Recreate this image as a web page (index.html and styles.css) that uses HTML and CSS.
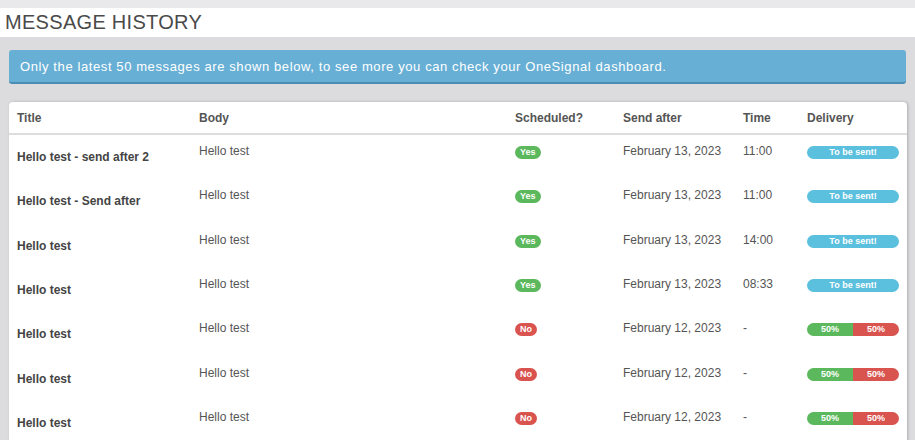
FILE: index.html
```html
<!DOCTYPE html>
<html lang="en">
<head>
<meta charset="utf-8">
<title>Message History</title>
<link rel="stylesheet" href="styles.css">
</head>
<body>
<div class="topbar"></div>
<header class="page-header">MESSAGE HISTORY</header>
<main class="content">
  <div class="alert">Only the latest 50 messages are shown below, to see more you can check your OneSignal dashboard.</div>
  <div class="card">
    <table class="history">
      <colgroup>
        <col class="c-title"><col class="c-body"><col class="c-sched"><col class="c-date"><col class="c-time"><col class="c-del">
      </colgroup>
      <thead>
        <tr><th>Title</th><th>Body</th><th>Scheduled?</th><th>Send after</th><th>Time</th><th>Delivery</th></tr>
      </thead>
      <tbody>
        <tr><td class="title">Hello test - send after 2</td><td>Hello test</td><td><span class="label yes">Yes</span></td><td>February 13, 2023</td><td>11:00</td><td><div class="pill">To be sent!</div></td></tr>
        <tr><td class="title">Hello test - Send after</td><td>Hello test</td><td><span class="label yes">Yes</span></td><td>February 13, 2023</td><td>11:00</td><td><div class="pill">To be sent!</div></td></tr>
        <tr><td class="title">Hello test</td><td>Hello test</td><td><span class="label yes">Yes</span></td><td>February 13, 2023</td><td>14:00</td><td><div class="pill">To be sent!</div></td></tr>
        <tr><td class="title">Hello test</td><td>Hello test</td><td><span class="label yes">Yes</span></td><td>February 13, 2023</td><td>08:33</td><td><div class="pill">To be sent!</div></td></tr>
        <tr><td class="title">Hello test</td><td>Hello test</td><td><span class="label no">No</span></td><td>February 12, 2023</td><td>-</td><td><div class="progress"><span class="seg ok" style="width:50%">50%</span><span class="seg fail" style="width:50%">50%</span></div></td></tr>
        <tr><td class="title">Hello test</td><td>Hello test</td><td><span class="label no">No</span></td><td>February 12, 2023</td><td>-</td><td><div class="progress"><span class="seg ok" style="width:50%">50%</span><span class="seg fail" style="width:50%">50%</span></div></td></tr>
        <tr><td class="title">Hello test</td><td>Hello test</td><td><span class="label no">No</span></td><td>February 12, 2023</td><td>-</td><td><div class="progress"><span class="seg ok" style="width:50%">50%</span><span class="seg fail" style="width:50%">50%</span></div></td></tr>
      </tbody>
    </table>
  </div>
</main>
</body>
</html>
```
FILE: styles.css
```css
html, body {
  margin: 0;
  padding: 0;
  overflow: hidden;
  height: 100%;
}
body {
  background: #dcdcde;
  font-family: "Liberation Sans", Arial, sans-serif;
  font-size: 12px;
  color: #555;
}
.topbar {
  height: 8px;
  background: #e9e9eb;
}
.page-header {
  background: #fff;
  height: 29px;
  line-height: 29px;
  padding-left: 5px;
  font-size: 20px;
  color: #4a4a4a;
  letter-spacing: 0.3px;
}
.content {
  padding: 13px 9px 0 9px;
}
.alert {
  background: #67afd5;
  border-bottom: 2px solid #4b8db4;
  border-radius: 3px;
  height: 32px;
  line-height: 33px;
  padding-left: 11px;
  color: #fff;
  font-size: 13px;
  letter-spacing: 0.6px;
}
.card {
  margin-top: 18px;
  background: #fff;
  border-radius: 4px;
  box-shadow: 1px 0 3px rgba(0, 0, 0, 0.22);
  height: 400px;
  width: 898px;
}
.history {
  width: 100%;
  border-collapse: collapse;
  table-layout: fixed;
}
.c-title { width: 182px; }
.c-body { width: 316px; }
.c-sched { width: 108px; }
.c-date { width: 120px; }
.c-time { width: 64px; }
.c-del { width: 108px; }
th {
  text-align: left;
  font-weight: bold;
  color: #555;
  line-height: 17px;
  padding: 8px 8px 6px;
  border-bottom: 2px solid #dddddd;
}
td {
  vertical-align: top;
  line-height: 17px;
  padding: 8px 8px 7.33px;
  color: #555;
}
td.title {
  font-weight: bold;
  color: #444;
  line-height: 29px;
}
.label {
  display: inline-block;
  vertical-align: top;
  margin-top: 3px;
  height: 13px;
  line-height: 13px;
  padding: 0 5px;
  border-radius: 7px;
  color: #fff;
  font-size: 9px;
  font-weight: bold;
}
.label.yes { background: #5cb85c; }
.label.no { background: #d9534f; }
.pill {
  margin-top: 3px;
  height: 13px;
  line-height: 13px;
  border-radius: 7px;
  background: #5bc0de;
  color: #fff;
  font-size: 9px;
  font-weight: bold;
  text-align: center;
}
.progress {
  margin-top: 3px;
  height: 13px;
  display: flex;
  border-radius: 7px;
  overflow: hidden;
}
.seg {
  line-height: 13px;
  color: #fff;
  font-size: 9px;
  font-weight: bold;
  text-align: center;
}
.seg.ok { background: #5cb85c; }
.seg.fail { background: #d9534f; }
```
